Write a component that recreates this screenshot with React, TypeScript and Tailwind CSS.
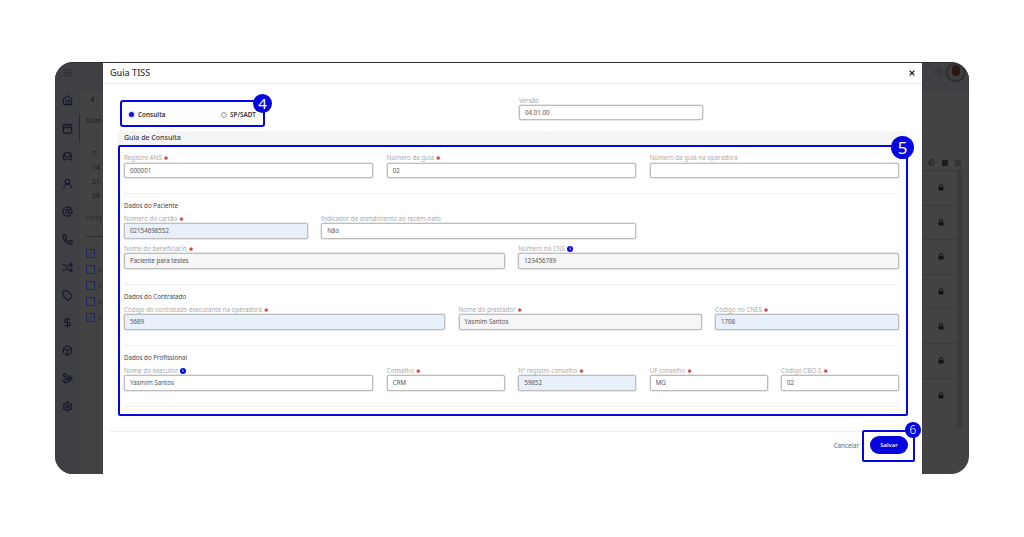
import { ReactNode } from "react";
import {
  AtSign,
  Armchair,
  Box,
  Calendar,
  ChevronLeft,
  CircleHelp,
  DollarSign,
  HandCoins,
  Home,
  Menu,
  Phone,
  Printer,
  Settings,
  Shuffle,
  Tag,
  UserRound,
  X,
} from "lucide-react";

type Tone = "white" | "blue" | "gray";

const toneClass: Record<Tone, string> = {
  white: "bg-white",
  blue: "bg-[#e8f0fc]",
  gray: "bg-[#f6f6f8]",
};

function Field({
  label,
  value = "",
  tone = "white",
  required = false,
  info = false,
  className = "",
  inputHeight = "h-[15.5px]",
}: {
  label: string;
  value?: string;
  tone?: Tone;
  required?: boolean;
  info?: boolean;
  className?: string;
  inputHeight?: string;
}) {
  return (
    <div className={className}>
      <div className="flex h-[10px] items-center gap-[2px] pt-[1px] text-[6.2px] leading-[10px] text-[#aaaaaa]">
        <span>{label}</span>
        {required && <span className="text-[5.5px] text-[#d23c3c]">✱</span>}
        {info && (
          <span className="flex h-[6px] w-[6px] items-center justify-center rounded-full bg-[#0a0ae0] text-[4px] font-bold text-white">
            i
          </span>
        )}
      </div>
      <div
        className={`flex items-center rounded-[2px] border border-[#bdbdbd] px-[5px] text-[6.2px] text-[#555] shadow-[0_0_0_0.5px_#d4d4d4] ${inputHeight} ${toneClass[tone]}`}
      >
        {value}
      </div>
    </div>
  );
}

function Section({ title, children }: { title: string; children: ReactNode }) {
  return (
    <div className="mt-[7.5px]">
      <div className="h-[10px] text-[6.2px] leading-[10px] text-[#444]">{title}</div>
      <div className="mt-[2px]">{children}</div>
      <div className="mt-[15px] border-b border-[#f0f0f0]" />
    </div>
  );
}

function Badge({ n, className }: { n: number; className: string }) {
  return (
    <div
      className={`absolute flex items-center justify-center rounded-full bg-[#0505e0] text-white ${className}`}
    >
      {n}
    </div>
  );
}

function SmallLock() {
  return (
    <svg width="6" height="7" viewBox="0 0 6 7">
      <path d="M1.5 3V2a1.5 1.5 0 0 1 3 0v1" fill="none" stroke="currentColor" strokeWidth="0.9" />
      <rect x="0.5" y="3" width="5" height="3.5" rx="0.5" fill="currentColor" />
    </svg>
  );
}

const sideIcons = [
  Home,
  Calendar,
  Armchair,
  UserRound,
  AtSign,
  Phone,
  Shuffle,
  Tag,
  DollarSign,
  Box,
  HandCoins,
  Settings,
];

const filters = ["", "Al", "C", "G", "D"];

export default function App() {
  return (
    <div
      className="h-[537px] w-[1024px] overflow-hidden bg-white pt-[62px] pl-[55px]"
      style={{ fontFamily: '"Noto Sans", "DejaVu Sans", sans-serif' }}
    >
      <div className="relative flex h-[412px] w-[914px] overflow-hidden rounded-[18px] border-t border-[#2e2e2e] bg-[#434343] blur-[0.4px]">
        {/* app behind the modal */}
        <aside className="relative flex w-[25px] flex-col items-center bg-[#3f4044] text-[#14162a]">
          <div className="flex h-[20px] items-center text-[#26272c]">
            <Menu size={10} />
          </div>
          <div className="mt-[12px] flex flex-col items-center gap-[16.8px]">
            {sideIcons.map((Icon, i) => (
              <Icon key={i} size={11} strokeWidth={2.5} />
            ))}
          </div>
          <div className="absolute top-[51px] right-0 h-[28px] w-[1.5px] bg-[#1a2080]" />
        </aside>

        <div className="flex min-w-0 flex-1 flex-col">
          <div className="flex h-[28px] items-start justify-end gap-[4px] bg-[#3f4044] pr-[4px]">
            <CircleHelp size={8} className="mt-[5px] text-[#2c2c2c]" />
            <div className="flex h-[19px] w-[19px] items-start justify-center overflow-hidden rounded-full border border-[#202020] bg-[#3d3d3d]">
              <div className="mt-[1px] h-[11px] w-[8px] rounded-full bg-[#2a1512]" />
            </div>
          </div>
          <div className="flex flex-1 justify-between">
            <div className="w-[23px] pt-[4px] pl-[6px] text-[7px] text-[#1c1c1c]">
              <ChevronLeft size={9} strokeWidth={3} className="ml-[2px]" />
              <div className="mt-[12px]">Dom</div>
              <div className="mt-[22px] flex flex-col gap-[4px] pl-[6px] leading-[10px]">
                <span>7</span>
                <span>14</span>
                <span>21</span>
                <span>28</span>
              </div>
              <div className="mt-[12px] text-[#2b2b2b]">Pesq</div>
              <div className="mt-[13px] w-[40px] border-t border-[#2a2a2a]" />
              <div className="mt-[12px] flex flex-col gap-[7px]">
                {filters.map((name, i) => (
                  <div key={i} className="flex items-center gap-[3px] text-[#2b2b2b]">
                    <div className="flex h-[9px] w-[9px] items-center justify-center border border-[#1e2368] text-[6px] leading-none text-[#1e2368]">
                      {i === 0 || i === 4 ? "✓" : ""}
                    </div>
                    <span className="text-[6px] leading-none">{name}</span>
                  </div>
                ))}
              </div>
            </div>
            <div className="flex w-[47px] flex-col pt-[64px] pr-[7px]">
              <div className="flex h-[15px] items-center justify-end gap-[7px] pr-[1px] text-[#1c1c1c]">
                <Printer size={7} />
                <div className="h-[6px] w-[6px] bg-[#1c1c1c]" />
                <div className="h-[6px] w-[6px] bg-[#333]" />
              </div>
              <div className="flex">
                <div className="flex-1">
                  {[0, 1, 2, 3, 4, 5, 6].map((row) => (
                    <div
                      key={row}
                      className="flex h-[34.6px] items-center justify-center border-t border-[#3a3a3a] pl-[3px] text-[#111]"
                    >
                      <SmallLock />
                    </div>
                  ))}
                </div>
                <div className="h-[258px] w-[5px] bg-[#3a3a3a]" />
              </div>
            </div>
          </div>
        </div>

        {/* modal */}
        <div className="absolute top-0 left-[48px] flex h-[411px] w-[819px] flex-col bg-white">
          <div className="flex h-[21px] items-center justify-between border-b border-[#e8e8e8] pr-[6px] pl-[7px]">
            <span className="text-[9px] font-medium text-[#3a3a3a]">Guia TISS</span>
            <X size={8} strokeWidth={3.5} className="text-[#222]" />
          </div>

          <div className="flex h-[47px] pl-[15px]">
            <div className="flex w-[401px] items-center pt-[14px] pl-[11px] text-[6.4px] font-semibold text-[#333]">
              <span className="h-[5px] w-[5px] rounded-full bg-[#0a0ae0] ring-1 ring-[#d8d8ff]" />
              <span className="ml-[4px] w-[83px]">Consulta</span>
              <span className="h-[6px] w-[6px] rounded-full border border-[#999]" />
              <span className="ml-[3px]">SP/SADT</span>
            </div>
            <div className="w-[184px] pt-[11px]">
              <Field label="Versão" value="04.01.00" inputHeight="h-[15px]" />
            </div>
          </div>

          <div className="mx-[15px] flex h-[14px] items-center bg-[#f5f5f5] px-[6px] text-[7px] font-medium text-[#3a3a4a]">
            Guia de Consulta
          </div>

          <div className="mt-[7.5px] mr-[23px] ml-[21px]">
            <div className="grid grid-cols-3 gap-x-[13.5px]">
              <Field label="Registro ANS" value="000001" required />
              <Field label="Número da guia" value="02" required />
              <Field label="Número da guia na operadora" />
            </div>
            <div className="mt-[14.5px] border-b border-[#f0f0f0]" />

            <Section title="Dados do Paciente">
              <div className="grid grid-cols-12 gap-x-[13.5px] gap-y-[4.5px]">
                <Field className="col-span-3" label="Número do cartão" value="02154698552" tone="blue" required />
                <Field className="col-span-5" label="Indicador de atendimento ao recém-nato" value="Não" />
                <div className="col-span-4" />
                <Field className="col-span-6" label="Nome do beneficiário" value="Paciente para testes" tone="gray" required />
                <Field className="col-span-6" label="Número no CNS" value="123456789" tone="gray" info />
              </div>
            </Section>

            <Section title="Dados do Contratado">
              <div className="grid grid-cols-[321px_243px_1fr] gap-x-[13.5px]">
                <Field label="Código do contratado executante na operadora" value="5689" tone="blue" required />
                <Field label="Nome do prestador" value="Yasmim Santos" tone="gray" required />
                <Field label="Código no CNES" value="1708" tone="blue" required />
              </div>
            </Section>

            <Section title="Dados do Profissional">
              <div className="grid grid-cols-6 gap-x-[13.5px]">
                <Field className="col-span-2" label="Nome do executor" value="Yasmim Santos" info />
                <Field label="Conselho" value="CRM" required />
                <Field label="Nº registro conselho" value="59852" tone="blue" required />
                <Field label="UF conselho" value="MG" required />
                <Field label="Código CBO-S" value="02" required />
              </div>
            </Section>
          </div>

          <div className="mx-[7px] mt-auto flex h-[43px] items-start justify-end gap-[11px] border-t border-[#ececec] pt-[4px] pr-[7px]">
            <span className="mt-[5px] text-[6.2px] text-[#666]">Cancelar</span>
            <span className="flex h-[18px] w-[38px] items-center justify-center rounded-full bg-[#0505e0] text-[6px] font-medium text-white">
              Salvar
            </span>
          </div>
        </div>

        {/* annotations */}
        <div className="absolute top-[37px] left-[65px] h-[27px] w-[145px] rounded-[3px] border-2 border-[#0505e0]" />
        <Badge n={4} className="top-[31px] left-[198px] h-[19px] w-[19px] text-[15px]" />
        <div className="absolute top-[82px] left-[63px] h-[271px] w-[790px] rounded-[2px] border-2 border-[#0505e0]" />
        <Badge n={5} className="top-[73px] left-[836px] h-[23px] w-[23px] text-[17px]" />
        <div className="absolute top-[367px] left-[807px] h-[32px] w-[53px] rounded-[2px] border-2 border-[#0505e0]" />
        <Badge n={6} className="top-[359px] left-[850px] h-[16px] w-[16px] text-[12px] font-light" />
      </div>
    </div>
  );
}
